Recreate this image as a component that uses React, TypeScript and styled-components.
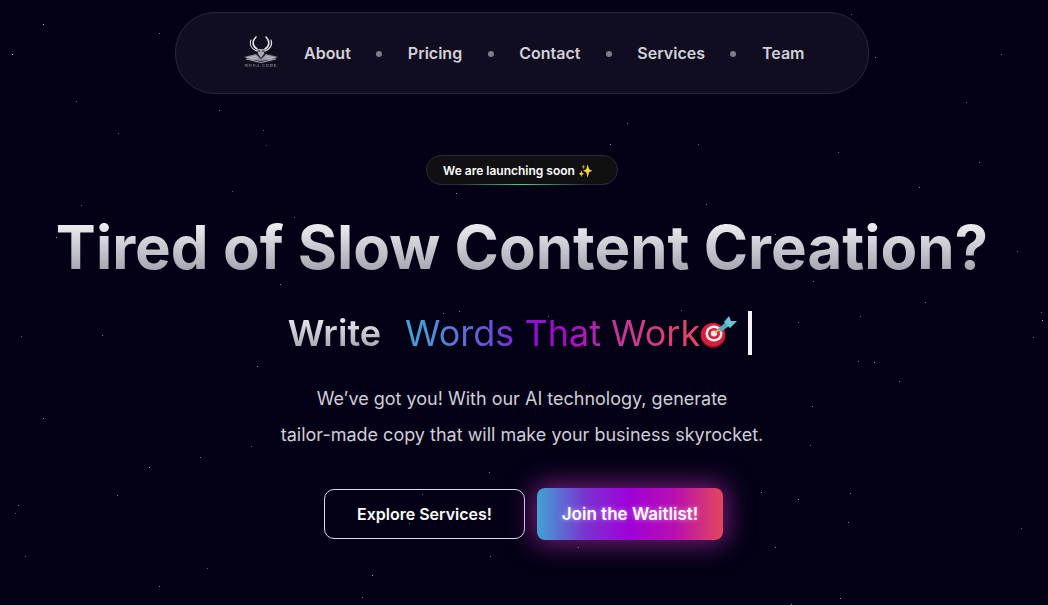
import React from "react";
import styled, { createGlobalStyle } from "styled-components";

const Global = createGlobalStyle`
  html, body { margin: 0; padding: 0; background: #040016; height: 100%; overflow: hidden; }
  body { font-family: Inter, "Liberation Sans", sans-serif; }
`;

const Page = styled.main`
  position: relative;
  width: 1048px;
  height: 605px;
  box-sizing: border-box;
  padding-right: 4px;
  overflow: hidden;
  background: #040016;
  display: flex;
  flex-direction: column;
  align-items: center;
`;

const Stars = styled.svg`
  position: absolute;
  inset: 0;
  width: 100%;
  height: 100%;
`;

const Nav = styled.nav`
  position: relative;
  margin-top: 12px;
  width: 694px;
  height: 82px;
  box-sizing: border-box;
  border: 1px solid #2a2839;
  border-radius: 40px;
  background: #100d20;
  display: flex;
  align-items: center;
  padding-left: 67px;
`;

const Logo = styled.svg`
  width: 36px;
  height: 34px;
  margin-right: 25px;
  flex: none;
`;

const NavLink = styled.a`
  font-size: 16px;
  font-weight: 600;
  line-height: 20px;
  color: #d2d1d9;
`;

const Dot = styled.span`
  width: 6px;
  height: 6px;
  border-radius: 50%;
  background: #7d7c8c;
  margin: 2px 25.5px 0;
  flex: none;
`;

const Badge = styled.div`
  position: relative;
  margin-top: 61px;
  width: 192px;
  height: 30px;
  box-sizing: border-box;
  border: 1px solid #2b2a38;
  border-radius: 15px;
  background: #101013;
  display: flex;
  align-items: center;
  padding-left: 16px;
  font-size: 12px;
  font-weight: 600;
  color: #fff;
`;

const BadgeGlow = styled.span`
  position: absolute;
  left: 30px;
  right: 30px;
  bottom: -1px;
  height: 1px;
  background: linear-gradient(90deg, transparent, #3ed68a, transparent);
`;

const Title = styled.h1`
  position: relative;
  margin: 24px 0 0;
  font-size: 60px;
  line-height: 76px;
  font-weight: 700;
  white-space: nowrap;
  background: linear-gradient(180deg, #ececf0 20%, #a5a5b0 82%);
  -webkit-background-clip: text;
  background-clip: text;
  color: transparent;
`;

const TypeRow = styled.div`
  position: relative;
  margin: 25px 4px 0 0;
  display: flex;
  align-items: center;
  height: 46px;
  font-size: 36px;
  line-height: 46px;
  white-space: nowrap;
`;

const WriteWord = styled.span`
  font-weight: 600;
  background: linear-gradient(180deg, #e6e6ea 20%, #a5a5b0 85%);
  -webkit-background-clip: text;
  background-clip: text;
  color: transparent;
  margin-right: 24px;
`;

const Typed = styled.span`
  font-weight: 400;
  background: linear-gradient(90deg, #3fa9d8 0%, #6a50d6 30%, #9010dc 42%, #a80ac8 55%, #c0389c 72%, #e5485a 100%);
  -webkit-background-clip: text;
  background-clip: text;
  color: transparent;
`;

const Target = styled.svg`
  width: 37px;
  height: 36px;
  flex: none;
`;

const Caret = styled.span`
  width: 4px;
  height: 44px;
  background: #f4f4f6;
  margin-left: 11px;
  flex: none;
`;

const Copy = styled.p`
  position: relative;
  margin: 25px 0 0;
  text-align: center;
  font-size: 18px;
  line-height: 36px;
  font-weight: 400;
  color: #d0cfd9;
`;

const Actions = styled.div`
  position: relative;
  margin: 35px 0 0 3px;
  display: flex;
  gap: 12px;
  align-items: center;
`;

const OutlineButton = styled.button`
  width: 201px;
  height: 50px;
  box-sizing: border-box;
  border: 1px solid #dcdbe2;
  border-radius: 10px;
  background: transparent;
  color: #fff;
  font: 600 16px Inter, sans-serif;
`;

const GlowButton = styled.button`
  width: 186px;
  height: 52px;
  border: 0;
  border-radius: 8px;
  background: linear-gradient(90deg, #42a3d3 0%, #7a33d0 26%, #a000d8 50%, #b90fb0 74%, #e2475b 100%);
  box-shadow: 0 0 26px 4px rgba(190, 50, 190, 0.6);
  color: #fff;
  font: 600 17px Inter, sans-serif;
  text-shadow: 0 0 5px rgba(255, 255, 255, 0.55);
`;

const LogoCaption = styled.text`
  font-family: "Liberation Serif", serif;
  font-size: 4px;
  letter-spacing: 1.1px;
  fill: #c4c4cc;
`;

const links = ["About", "Pricing", "Contact", "Services", "Team"];

const stars: [number, number, number][] = [
  [43, 24, 0.8], [12, 54, 0.9], [159, 33, 0.5], [76, 101, 0.4], [118, 133, 0.4], [219, 110, 0.5], [263, 130, 0.4],
  [266, 145, 0.3], [232, 191, 0.4], [81, 205, 0.4], [56, 237, 0.6], [294, 217, 0.4], [280, 284, 0.5],
  [21, 336, 0.4], [102, 335, 0.5], [257, 366, 0.6], [43, 418, 0.6], [251, 446, 0.4], [200, 457, 0.5],
  [149, 467, 0.7], [117, 495, 0.5], [18, 505, 0.5], [15, 513, 0.4], [25, 556, 0.4], [207, 568, 0.4], [159, 586, 0.5],
  [851, 14, 0.4], [875, 57, 0.5], [1001, 54, 0.5], [966, 102, 0.4], [838, 152, 0.4], [979, 162, 0.5], [919, 187, 0.5],
  [775, 234, 0.5], [1017, 251, 0.4], [813, 281, 0.5],
  [925, 302, 0.5], [860, 316, 0.4], [798, 322, 0.5], [1041, 312, 0.4], [1042, 320, 0.7], [1033, 337, 0.5],
  [858, 361, 0.4], [874, 362, 0.6], [899, 381, 0.5], [812, 406, 0.5], [810, 445, 0.4], [761, 492, 0.6],
  [798, 499, 0.7], [850, 493, 0.5], [848, 522, 0.5], [1021, 528, 0.4], [775, 547, 0.5], [840, 598, 0.6], [791, 604, 0.6],
  [627, 123, 0.5], [610, 144, 0.6], [698, 144, 0.4], [456, 193, 0.6], [706, 204, 0.5],
  [578, 547, 0.5], [490, 556, 0.5], [372, 575, 0.7], [362, 597, 0.5],
  [443, 313, 0.5], [459, 311, 0.5], [548, 316, 0.4], [681, 310, 0.4], [489, 472, 0.5], [422, 494, 0.4], [409, 523, 0.5],
];

export default function App() {
  return (
    <Page>
      <Global />
      <Stars viewBox="0 0 1048 605">
        {stars.map(([x, y, o]) => (
          <rect key={`${x}-${y}`} x={x} y={y} width="1" height="1" fill="#fff" opacity={o} />
        ))}
      </Stars>
      <Nav>
        <Logo viewBox="0 0 36 34">
          <g fill="none" stroke="#e2e2e7" strokeLinecap="round">
            <path d="M13 1 C9 5 9 10 14 13" strokeWidth="1.6" />
            <path d="M23 1 C27 5 27 10 22 13" strokeWidth="1.6" />
            <path d="M8 4 C6 9 9 13 14 15" strokeWidth="1.1" />
            <path d="M28 4 C30 9 27 13 22 15" strokeWidth="1.1" />
          </g>
          <path d="M14 13 L22 13 L21 18 L18 22 L15 18 Z" fill="#a8a8b2" />
          <circle cx="16" cy="15" r="0.8" fill="#100d20" />
          <circle cx="20" cy="15" r="0.8" fill="#100d20" />
          <path d="M1 21 L13 18 L18 23 L23 18 L35 21 L27 24 L18 25 L9 24 Z" fill="#8f8f9b" />
          <path d="M4 22 L14 20 M32 22 L22 20 M7 23 L15 22 M29 23 L21 22" stroke="#e2e2e7" strokeWidth="0.6" />
          <path d="M3 23 L18 26.5 L33 23" stroke="#d8d8de" strokeWidth="0.8" fill="none" />
          <LogoCaption x="18" y="31" textAnchor="middle">NOVA CODE</LogoCaption>
        </Logo>
        {links.map((l, i) => (
          <React.Fragment key={l}>
            <NavLink>{l}</NavLink>
            {i < links.length - 1 && <Dot />}
          </React.Fragment>
        ))}
      </Nav>
      <Badge>
        We are launching soon ✨
        <BadgeGlow />
      </Badge>
      <Title>Tired of Slow Content Creation?</Title>
      <TypeRow>
        <WriteWord>Write</WriteWord>
        <Typed>Words That Work</Typed>
        <Target viewBox="0 0 37 36">
          <ellipse cx="13" cy="20.5" rx="12.5" ry="12.5" fill="#8e0f20" />
          <ellipse cx="13" cy="19.5" rx="12" ry="11.5" fill="#d4203a" />
          <ellipse cx="14" cy="18.5" rx="8.5" ry="8" fill="#f5eeee" />
          <ellipse cx="14" cy="18.5" rx="6" ry="5.6" fill="#d4203a" />
          <ellipse cx="14" cy="18.5" rx="3.2" ry="3" fill="#f5eeee" />
          <path d="M15 17.5 L20 13.5" stroke="#e3b85a" strokeWidth="2" />
          <path d="M18 14 L26 7 L29 11 L21 17 Z" fill="#5aaabd" />
          <path d="M24 7 L29 1 L31 6 L37 6 L30 13 Z" fill="#6cc3d6" />
        </Target>
        <Caret />
      </TypeRow>
      <Copy>
        We’ve got you! With our AI technology, generate
        <br />
        tailor-made copy that will make your business skyrocket.
      </Copy>
      <Actions>
        <OutlineButton>Explore Services!</OutlineButton>
        <GlowButton>Join the Waitlist!</GlowButton>
      </Actions>
    </Page>
  );
}
